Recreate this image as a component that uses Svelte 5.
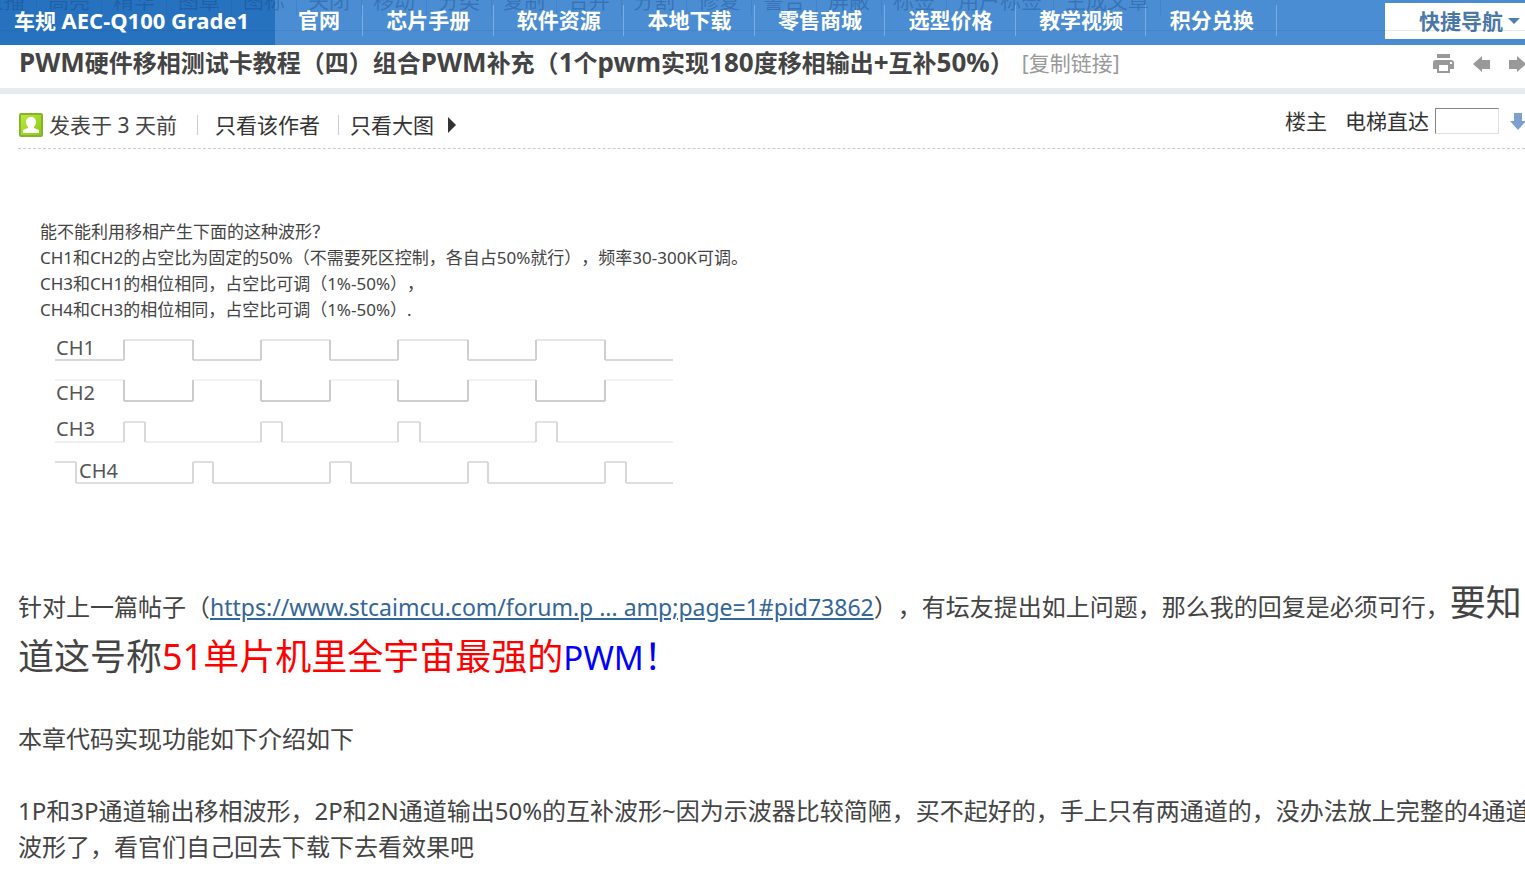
<script>
  const tools = ['直播', '高亮', '精华', '图章', '图标', '关闭', '移动', '分类', '复制', '合并', '分割', '修复', '警告', '屏蔽', '标签', '用户标签', '生成文章'];
  const links = ['官网', '芯片手册', '软件资源', '本地下载', '零售商城', '选型价格', '教学视频', '积分兑换'];
  const question = [
    '能不能利用移相产生下面的这种波形？',
    'CH1和CH2的占空比为固定的50%（不需要死区控制，各自占50%就行），频率30-300K可调。',
    'CH3和CH1的相位相同，占空比可调（1%-50%），',
    'CH4和CH3的相位相同，占空比可调（1%-50%）.'
  ];
  // Each trace: its levels, the level it starts at, and the x of every edge.
  const half = [69, 138, 206, 275, 343, 413, 481, 550];
  const traces = [
    { name: 'CH1', top: 5, low: 25, start: 'low', edges: half, label: [1, 20], high: '#e6e6e6', base: '#d8d8d8', side: '#cfcfcf' },
    { name: 'CH2', top: 45, low: 66, start: 'high', edges: half, label: [1, 65], high: '#f3f3f3', base: '#cecece', side: '#cccccc' },
    { name: 'CH3', top: 87, low: 107, start: 'low', edges: [69, 90, 206, 227, 343, 365, 481, 502], label: [1, 101], high: '#e2e2e2', base: '#eeeeee', side: '#d9d9d9' },
    { name: 'CH4', top: 127, low: 148, start: 'high', edges: [21, 138, 158, 275, 296, 413, 433, 550, 571], label: [24, 143], high: '#dfdfdf', base: '#dedede', side: '#d8d8d8' }
  ];
  function parts(t) {
    const xs = [0, ...t.edges, 618];
    let up = t.start === 'high';
    let high = '';
    let base = '';
    for (let i = 0; i < xs.length - 1; i++) {
      const seg = `M${xs[i]} ${up ? t.top : t.low}H${xs[i + 1]}`;
      if (up) high += seg;
      else base += seg;
      up = !up;
    }
    const side = t.edges.map((x) => `M${x} ${t.top}V${t.low}`).join('');
    return { high, base, side };
  }
  let floor = $state('');
</script>

<div class="page">
  <header class="bar">
    <div class="tools">
      {#each tools as tool}<span>{tool}</span>{/each}
    </div>
    <a class="brand" href="#home">车规 <span>AEC-Q100 Grade1</span></a>
    <nav>
      {#each links as link}<a href="#nav">{link}</a>{/each}
    </nav>
    <button class="quick" type="button">快捷导航<svg width="12" height="6" viewBox="0 0 12 6" aria-hidden="true"><path d="M0 0H12L6 6Z" fill="#4a7fb5" /></svg></button>
  </header>

  <main>
    <div class="title">
      <h1><span>PWM</span>硬件移相测试卡教程（四）组合<span>PWM</span>补充（<span>1</span>个<span>pwm</span>实现<span>180</span>度移相输出<span>+</span>互补<span>50%</span>）</h1>
      <a class="copy" href="#copy">[复制链接]</a>
      <div class="actions">
        <button type="button" aria-label="打印">
          <svg width="22" height="20" viewBox="0 0 22 20"><path fill="#999" d="M4 0H17V4H4ZM3 6H18Q21 6 21 9V15H17V19H4V15H0V9Q0 6 3 6ZM6 11V17H15V11ZM17 8V10H19V8Z" fill-rule="evenodd" /></svg>
        </button>
        <button type="button" aria-label="上一主题">
          <svg width="18" height="18" viewBox="0 0 18 18"><path fill="#999" d="M0 9L9 1V5H17V14H9V17Z" /></svg>
        </button>
        <button type="button" aria-label="下一主题">
          <svg width="16" height="18" viewBox="0 0 16 18"><path fill="#999" d="M17 9L8 1V5H0V14H8V17Z" /></svg>
        </button>
      </div>
    </div>

    <article>
      <div class="meta">
        <div class="info">
          <svg width="24" height="24" viewBox="0 0 24 24" aria-hidden="true">
            <defs><linearGradient id="g" x1="0" y1="0" x2="1" y2="1"><stop offset="0" stop-color="#c0e83c" /><stop offset="1" stop-color="#86cc12" /></linearGradient></defs>
            <rect x="1" y="1" width="22" height="22" rx="1" fill="url(#g)" stroke="#86b52b" stroke-width="2" />
            <path fill="#fff" d="M12 4C15 4 17 6 17 9C17 11 16 13 15 14V15L20 17V20H4V17L9 15V14C8 13 7 11 7 9C7 6 9 4 12 4Z" />
          </svg>
          <span class="when">发表于 3 天前</span>
          <a href="#author">只看该作者</a>
          <a class="big" href="#images">只看大图<svg width="8" height="16" viewBox="0 0 8 16" aria-hidden="true"><path d="M0 0L8 8L0 16Z" fill="#333" /></svg></a>
        </div>
        <div class="floor">
          <strong>楼主</strong>
          <label for="floor">电梯直达</label>
          <input id="floor" type="text" bind:value={floor} />
          <button type="button" aria-label="跳转">
            <svg width="15" height="18" viewBox="0 0 15 18"><path fill="#7da0cf" d="M4 1H12V9H16L8 18L0 9H4Z" /></svg>
          </button>
        </div>
      </div>

      <figure>
        <figcaption>
          {#each question as line}<div>{line}</div>{/each}
        </figcaption>
        <svg width="622" height="154" viewBox="0 0 622 154">
          {#each traces as t}
            {@const p = parts(t)}
            <g fill="none" stroke-width="2">
              <path d={p.high} stroke={t.high} />
              <path d={p.base} stroke={t.base} />
              <path d={p.side} stroke={t.side} />
            </g>
            <text x={t.label[0]} y={t.label[1]}>{t.name}</text>
          {/each}
        </svg>
      </figure>

      <div class="body">
        <p>针对上一篇帖子（<a href="#post">https://www.stcaimcu.com/forum.p ... amp;page=1#pid73862</a>），有坛友提出如上问题，那么我的回复是必须可行，<span class="large">要知<br />道这号称<span class="red">51单片机里全宇宙最强的</span><span class="blue"><span class="pwm">PWM</span>！</span></span></p>
        <p>本章代码实现功能如下介绍如下</p>
        <p>1P和3P通道输出移相波形，2P和2N通道输出50%的互补波形~因为示波器比较简陋，买不起好的，手上只有两通道的，没办法放上完整的4通道<br />波形了，看官们自己回去下载下去看效果吧</p>
      </div>
    </article>
  </main>
</div>

<style>
  :global(body) {
    margin: 0;
    background: #fff;
  }
  .page {
    overflow: hidden;
    color: #444;
    font-family: 'Noto Sans', 'Noto Sans CJK SC', sans-serif;
    font-size: 21px;
    text-spacing-trim: space-all;
    white-space: nowrap;
  }
  a {
    color: inherit;
    text-decoration: none;
  }
  button {
    padding: 0;
    border: 0;
    background: none;
    font: inherit;
  }
  svg {
    display: block;
    flex: none;
  }
  .bar {
    position: relative;
    display: flex;
    height: 45px;
    overflow: hidden;
    background: #4a8dd3;
    color: #fff;
    font-weight: bold;
    line-height: 40px;
  }
  .bar::after {
    content: '';
    position: absolute;
    inset: 30px 0 auto;
    height: 1px;
    background: rgba(20, 60, 120, 0.1);
  }
  .tools {
    position: absolute;
    left: -28px;
    top: -15px;
    display: flex;
    z-index: 1;
    color: rgba(15, 60, 120, 0.32);
    font-weight: normal;
    line-height: 30px;
    pointer-events: none;
  }
  .tools span {
    padding: 0 11px;
    border-right: 1px solid rgba(15, 60, 120, 0.12);
  }
  .brand {
    box-sizing: border-box;
    width: 275px;
    padding-left: 14px;
    background: #2672bf;
  }
  .brand span {
    font-size: 22px;
  }
  nav {
    display: grid;
    flex: 1;
    grid-template-columns: 88px repeat(7, 1fr);
    margin-right: 108px;
    text-align: center;
  }
  nav a {
    background: linear-gradient(#79acdf, #79acdf) right 5px / 1px 31px no-repeat;
  }
  .quick {
    display: flex;
    align-items: center;
    gap: 5px;
    height: 36px;
    margin-top: 3px;
    padding: 0 5px 0 34px;
    background: #fff;
    color: #4a78a8;
    font-weight: bold;
    line-height: 36px;
  }
  .title {
    display: flex;
    align-items: flex-start;
    height: 43px;
    padding-left: 19px;
    border-bottom: 6px solid #e5ebef;
    line-height: 36px;
  }
  h1 {
    margin: 0;
    font-size: 24px;
  }
  h1 span {
    font-size: 26px;
    line-height: 32px;
  }
  .copy {
    margin-left: 8px;
    color: #999;
  }
  .actions {
    display: flex;
    align-items: center;
    gap: 18px;
    height: 38px;
    margin-left: auto;
  }
  article {
    padding-left: 18px;
  }
  .meta {
    display: flex;
    justify-content: space-between;
    height: 54px;
    border-bottom: 1px dashed #ccc;
    line-height: 48px;
  }
  .info {
    display: flex;
    align-items: center;
    padding: 8px 0 0 1px;
  }
  .when {
    margin-left: 6px;
  }
  .info a {
    display: flex;
    align-items: center;
    margin-left: 20px;
    padding-left: 18px;
    background: linear-gradient(#ccc, #ccc) 0 50% / 1px 20px no-repeat;
    color: #333;
  }
  .info .big {
    gap: 14px;
    margin-left: 18px;
    padding-left: 12px;
  }
  .floor {
    display: flex;
    align-items: center;
    gap: 6px;
    color: #333;
  }
  .floor strong {
    margin-right: 12px;
    font-weight: normal;
  }
  .floor input {
    box-sizing: border-box;
    width: 64px;
    height: 26px;
    border: 1px solid;
    border-color: #848484 #e0e0e0 #e0e0e0 #848484;
    padding: 0 4px;
    font: inherit;
  }
  .floor button {
    margin-left: 5px;
  }
  figure {
    margin: 70px 22px 0;
    font-size: 17px;
    line-height: 26px;
  }
  figure svg {
    margin: 12px 0 0 15px;
    overflow: visible;
  }
  figure text {
    fill: #555;
    font-size: 20px;
  }
  .body {
    margin-top: 87px;
    font-size: 24px;
    line-height: 36px;
  }
  p {
    margin: 0 0 36px;
  }
  p a {
    color: #369;
    font-size: 23px;
    text-decoration: underline;
  }
  .large {
    font-size: 36px;
    line-height: 54px;
  }
  .red {
    color: red;
  }
  .blue {
    color: blue;
  }
  .pwm {
    font-size: 33px;
  }
</style>
